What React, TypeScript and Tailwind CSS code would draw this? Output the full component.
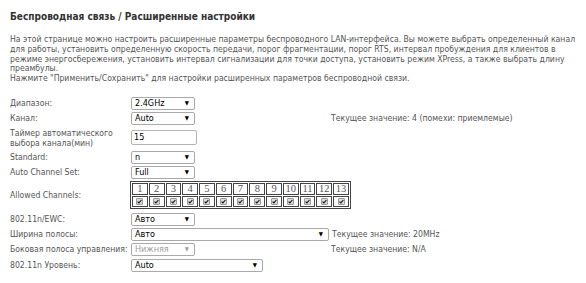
import React from 'react';

const FONT = { fontFamily: '"DejaVu Sans Condensed", "DejaVu Sans", sans-serif' };

function Select({ value, width, disabled }: { value: string; width: string; disabled?: boolean }) {
  return (
    <div
      className={`flex h-[13px] items-center justify-between rounded-[2px] border border-[#a9a9a9] bg-white pl-[3px] pr-[5px] text-[9px] ${width} ${
        disabled ? 'text-[#a0a0a0]' : 'text-black'
      }`}
    >
      <span className="leading-none">{value}</span>
      <span className={`text-[6px] leading-none ${disabled ? 'text-[#a0a0a0]' : 'text-black'}`}>▼</span>
    </div>
  );
}

function Check() {
  return (
    <span className="flex h-[7px] w-[7px] items-center justify-center rounded-[1px] border border-[#9a9a9a] bg-[#dcdcdc]">
      <svg width="5" height="5" viewBox="0 0 5 5">
        <path d="M0.6 2.6 L1.9 3.9 L4.4 1" stroke="#111" strokeWidth="1.1" fill="none" />
      </svg>
    </span>
  );
}

function Row({ label, h, children, note }: { label: React.ReactNode; h: string; children: React.ReactNode; note?: string }) {
  return (
    <div className={`flex items-center ${h}`}>
      <div className="w-[121px] shrink-0 whitespace-nowrap leading-[10px]">{label}</div>
      <div className="w-[200px] shrink-0">{children}</div>
      {note && <div className="text-[#555]">{note}</div>}
    </div>
  );
}

export default function App() {
  const channels = Array.from({ length: 13 }, (_, i) => i + 1);

  return (
    <div className="h-[283px] w-[586px] overflow-hidden bg-white pl-[10px] text-[8.6px] text-[#555]" style={FONT}>
      <div className="pt-[9px] text-[10px] font-bold text-[#333]">Беспроводная связь / Расширенные настройки</div>

      <div className="mt-[11px] whitespace-nowrap leading-[9.8px] text-[#555]">
        На этой странице можно настроить расширенные параметры беспроводного LAN-интерфейса. Вы можете выбрать определенный канал
        <br />
        для работы, установить определенную скорость передачи, порог фрагментации, порог RTS, интервал пробуждения для клиентов в
        <br />
        режиме энергосбережения, установить интервал сигнализации для точки доступа, установить режим XPress, а также выбрать длину
        <br />
        преамбулы.
        <br />
        Нажмите "Применить/Сохранить" для настройки расширенных параметров беспроводной связи.
      </div>

      <div className="mt-[12px] flex flex-col">
        <Row label="Диапазон:" h="h-[15px]">
          <Select value="2.4GHz" width="w-[64px]" />
        </Row>
        <Row label="Канал:" h="h-[15px]" note="Текущее значение: 4 (помехи: приемлемые)">
          <Select value="Auto" width="w-[64px]" />
        </Row>
        <Row
          label={
            <>
              Таймер автоматического
              <br />
              выбора канала(мин)
            </>
          }
          h="h-[24px]"
        >
          <div className="flex h-[15px] w-[66px] items-center rounded-[2px] border border-[#b5b5b5] bg-white pl-[2px] text-[9px] text-black">15</div>
        </Row>
        <Row label="Standard:" h="h-[15px]">
          <Select value="n" width="w-[64px]" />
        </Row>
        <Row label="Auto Channel Set:" h="h-[15px]">
          <Select value="Full" width="w-[64px]" />
        </Row>

        <div className="mt-[1px] flex h-[28px] items-center">
          <div className="w-[120px] shrink-0">Allowed Channels:</div>
          <div
            className="grid w-[221px] gap-px border border-[#444] p-px"
            style={{ gridTemplateColumns: 'repeat(13, 1fr)', fontFamily: '"Liberation Serif", serif' }}
          >
            {channels.map((c) => (
              <div key={`h${c}`} className="flex h-[12px] items-center justify-center border border-[#444] text-[10.5px] leading-none text-[#555]">
                {c}
              </div>
            ))}
            {channels.map((c) => (
              <div key={`c${c}`} className="flex h-[11px] items-center justify-center border border-[#444]">
                <Check />
              </div>
            ))}
          </div>
        </div>

        <div className="h-[3px]" />
        <Row label="802.11n/EWC:" h="h-[15px]">
          <Select value="Авто" width="w-[64px]" />
        </Row>
        <div className="flex h-[15px] items-center">
          <div className="w-[121px] shrink-0">Ширина полосы:</div>
          <Select value="Авто" width="w-[198px]" />
          <div className="ml-[3px] text-[#555]">Текущее значение: 20MHz</div>
        </div>
        <Row label="Боковая полоса управления:" h="h-[15px]" note="Текущее значение: N/A">
          <Select value="Нижняя" width="w-[64px]" disabled />
        </Row>
        <Row label="802.11n Уровень:" h="h-[17px]">
          <Select value="Auto" width="w-[132px]" />
        </Row>
        <div className="mt-[9px] ml-[121px] h-px w-[64px] bg-[#d8d8d8]" />
      </div>
    </div>
  );
}
